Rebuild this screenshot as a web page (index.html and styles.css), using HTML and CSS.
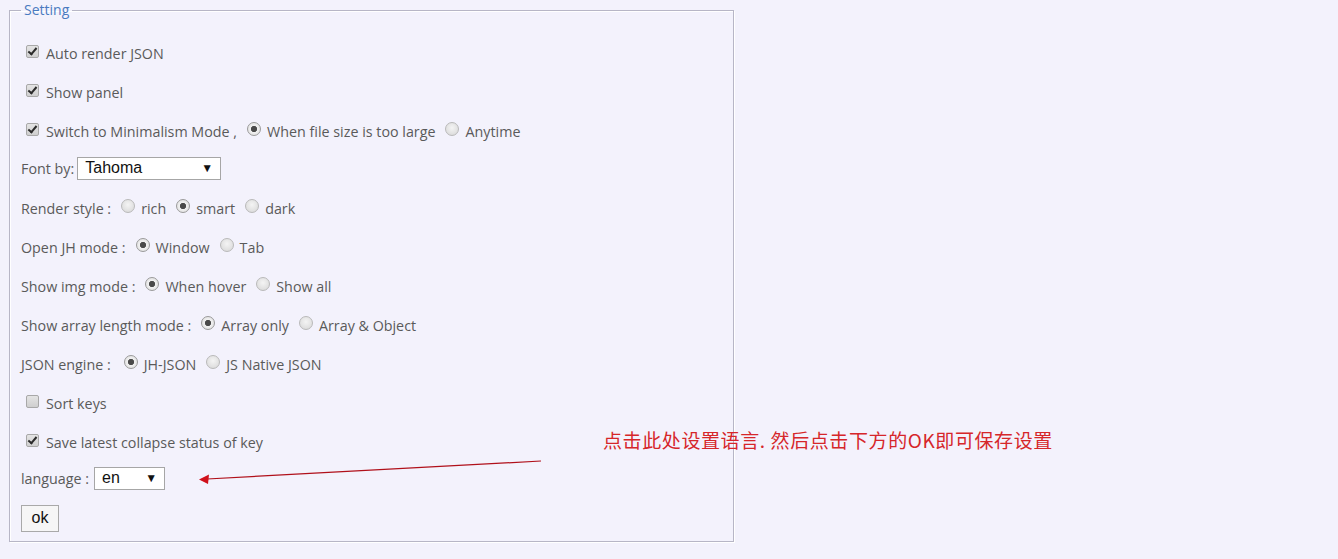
FILE: index.html
```html
<!DOCTYPE html>
<html lang="en">
<head>
<meta charset="utf-8">
<title>Setting</title>
<link rel="stylesheet" href="styles.css">
</head>
<body>
<fieldset class="setting">
  <legend class="legend">Setting</legend>
  <div class="row"><label class="opt"><input type="checkbox" class="cb" checked> Auto render JSON</label></div>
  <div class="row"><label class="opt"><input type="checkbox" class="cb" checked> Show panel</label></div>
  <div class="row"><label class="opt"><input type="checkbox" class="cb" checked> Switch to Minimalism Mode ,</label>
    <label class="opt"><input type="radio" name="mini" class="rd" checked> When file size is too large</label>
    <label class="opt"><input type="radio" name="mini" class="rd"> Anytime</label></div>
  <div class="row row-select">Font by:<span class="select select-font"><span>Tahoma</span><span class="caret">&#9660;</span></span></div>
  <div class="row row-after-select">Render style :
    <label class="opt"><input type="radio" name="rs" class="rd"> rich</label>
    <label class="opt"><input type="radio" name="rs" class="rd" checked> smart</label>
    <label class="opt"><input type="radio" name="rs" class="rd"> dark</label></div>
  <div class="row">Open JH mode :
    <label class="opt"><input type="radio" name="jh" class="rd" checked> Window</label>
    <label class="opt"><input type="radio" name="jh" class="rd"> Tab</label></div>
  <div class="row">Show img mode :
    <label class="opt"><input type="radio" name="img" class="rd" checked> When hover</label>
    <label class="opt"><input type="radio" name="img" class="rd"> Show all</label></div>
  <div class="row">Show array length mode :
    <label class="opt"><input type="radio" name="arr" class="rd" checked> Array only</label>
    <label class="opt"><input type="radio" name="arr" class="rd"> Array &amp; Object</label></div>
  <div class="row">JSON engine :
    <label class="opt"><input type="radio" name="eng" class="rd rd-wide" checked> JH-JSON</label>
    <label class="opt"><input type="radio" name="eng" class="rd"> JS Native JSON</label></div>
  <div class="row"><label class="opt"><input type="checkbox" class="cb"> Sort keys</label></div>
  <div class="row"><label class="opt"><input type="checkbox" class="cb" checked> Save latest collapse status of key</label></div>
  <div class="row row-lang">language :<span class="select select-lang"><span>en</span><span class="caret">&#9660;</span></span></div>
  <div class="row row-btn"><button class="ok" type="button">ok</button></div>
</fieldset>

<div class="note">点击此处设置语言. 然后点击下方的OK即可保存设置</div>
<svg class="arrow" width="360" height="30" viewBox="0 0 360 30" aria-hidden="true">
  <line x1="342" y1="2" x2="8" y2="20" stroke="#b0101a" stroke-width="1.2"/>
  <polygon points="0,20.5 10,15.5 9,25" fill="#d0101a"/>
</svg>
</body>
</html>
```

FILE: styles.css
```css
html, body {
  margin: 0;
  padding: 0;
  background: #f3f2fc;
}
body {
  width: 1338px;
  height: 559px;
  position: relative;
  font-family: "Open Sans", "Noto Sans", sans-serif;
  font-size: 14.3px;
  color: #5a5a5a;
  overflow: hidden;
}
.setting {
  box-sizing: border-box;
  width: 725px;
  margin: 1px 0 0 9px;
  padding: 15px 0 4px 11px;
  border: 1px solid #b7b6c6;
  box-shadow: 1px 1px 0 #ffffff, inset 1px 1px 0 #ffffff;
}
.legend {
  padding: 0 3px;
  line-height: 18px;
  color: #4a7bc0;
  font-size: 14px;
}
.row {
  height: 39px;
  display: flex;
  align-items: center;
  white-space: nowrap;
}
.opt {
  display: flex;
  align-items: center;
}
.cb, .rd {
  appearance: none;
  -webkit-appearance: none;
  width: 13px;
  height: 13px;
  margin: 0 7px 5px 5px;
  box-sizing: border-box;
  flex: none;
}
.cb {
  border: 1px solid #a8a8a8;
  border-radius: 2px;
  background: linear-gradient(#e4e4e4, #cfcfcf);
  position: relative;
}
.cb:checked::after {
  content: "";
  position: absolute;
  left: 3px;
  top: 0px;
  width: 3px;
  height: 7px;
  border: solid #2b2b2b;
  border-width: 0 2px 2px 0;
  transform: rotate(40deg);
}
.rd {
  width: 14px;
  height: 14px;
  border: 1px solid #b9b9b9;
  border-radius: 50%;
  background: radial-gradient(circle at 50% 40%, #f4f4f4, #d6d6d6);
  margin: 0 6px 5px 10px;
  position: relative;
}
.rd-wide {
  margin-left: 13px;
}
.rd:checked {
  border-color: #9a9a9a;
  background: radial-gradient(circle, #4a4a4a 0 2.8px, #f0f0f0 3.4px, #dcdcdc);
}
.row-select {
  height: 34px;
}
.row-after-select {
  margin-top: 4px;
}
.row-lang {
  height: 32px;
}
.row-btn {
  height: 38px;
  margin-top: 5px;
}
.select {
  box-sizing: border-box;
  display: flex;
  align-items: center;
  justify-content: space-between;
  height: 23px;
  margin-left: 3px;
  padding: 0 7px 0 7px;
  background: #ffffff;
  border: 1px solid #a6a6a6;
  font-family: "Liberation Sans", Arial, sans-serif;
  font-size: 16px;
  color: #111111;
}
.select-font {
  width: 144px;
}
.select-lang {
  width: 71px;
  margin-left: 5px;
}
.caret {
  font-size: 12px;
  color: #111;
}
.ok {
  box-sizing: border-box;
  width: 38px;
  height: 27px;
  padding: 0;
  background: #f6f6f6;
  border: 1px solid #a9a9a9;
  border-radius: 0;
  font-family: "Liberation Sans", Arial, sans-serif;
  font-size: 16px;
  color: #111;
}
.note {
  position: absolute;
  left: 603px;
  top: 427px;
  font-family: "Noto Sans CJK SC", sans-serif;
  font-size: 19px;
  letter-spacing: 0.6px;
  line-height: 26px;
  color: #d6262a;
}
.arrow {
  position: absolute;
  left: 199px;
  top: 459px;
}
```
